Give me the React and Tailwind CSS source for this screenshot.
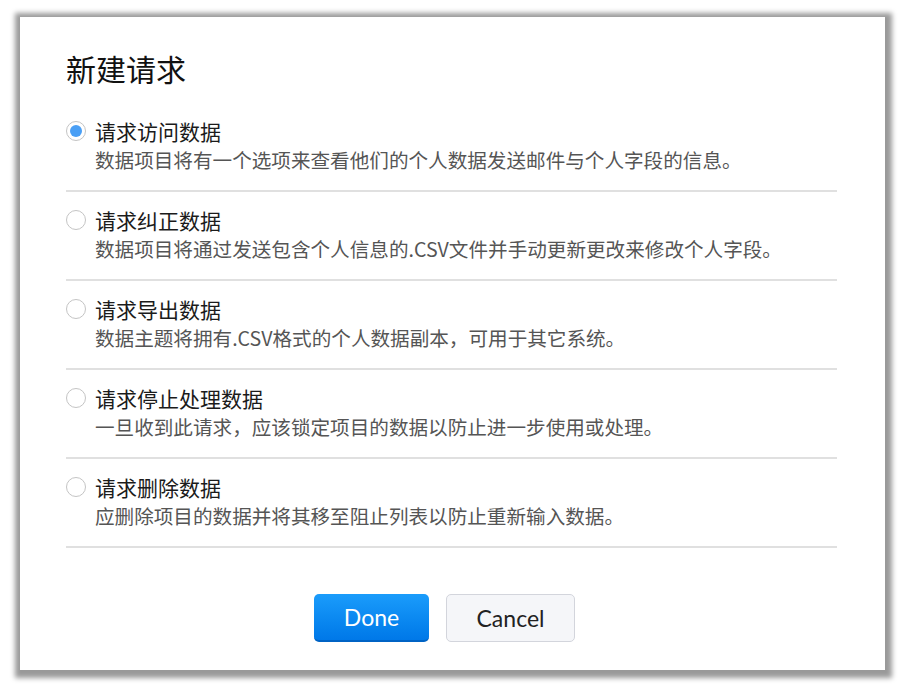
import { useState } from 'react';

const options = [
    { title: '请求访问数据', desc: '数据项目将有一个选项来查看他们的个人数据发送邮件与个人字段的信息。' },
    { title: '请求纠正数据', desc: '数据项目将通过发送包含个人信息的.CSV文件并手动更新更改来修改个人字段。' },
    { title: '请求导出数据', desc: '数据主题将拥有.CSV格式的个人数据副本，可用于其它系统。' },
    { title: '请求停止处理数据', desc: '一旦收到此请求，应该锁定项目的数据以防止进一步使用或处理。' },
    { title: '请求删除数据', desc: '应删除项目的数据并将其移至阻止列表以防止重新输入数据。' },
];

const cjk = { fontFamily: '"Microsoft YaHei", "Noto Sans CJK SC", sans-serif' };
const latin = { fontFamily: 'Lato, "Noto Sans CJK SC", sans-serif' };

const App = () => {
    const [selected, setSelected] = useState(0);

    return (
        <div className="min-h-screen bg-white pt-[17px] pl-[20px]" style={cjk}>
            <div className="w-[865px] h-[653px] bg-white shadow-[1px_2px_5px_6px_rgba(0,0,0,0.4)] pt-[33px] pl-[46px] pr-[48px] flex flex-col">
                <h2 className="text-[30px] leading-[36px] text-[#111] mb-[17px]">新建请求</h2>

                <div className="flex flex-col">
                    {options.map((opt, index) => (
                        <div key={opt.title}>
                            <button
                                onClick={() => setSelected(index)}
                                className="w-full flex gap-[9px] pt-[14px] pb-[15px] text-left"
                            >
                                <div className="h-[28px] flex items-center shrink-0">
                                    <span className="w-[20px] h-[20px] rounded-full border border-[#c4c4c4] bg-white flex items-center justify-center">
                                        {selected === index && <span className="w-[12px] h-[12px] rounded-full bg-[#4a9ff5]" />}
                                    </span>
                                </div>
                                <div>
                                    <p className="text-[21px] leading-[28px] text-[#1b1b1b]">{opt.title}</p>
                                    <p className="text-[19.6px] leading-[30px] text-[#555]">{opt.desc}</p>
                                </div>
                            </button>
                            <div className="h-[2px] bg-[#e0e0e0]" />
                        </div>
                    ))}
                </div>

                <div className="flex justify-center gap-[17px] mt-[46px] pr-[14px]" style={latin}>
                    <button className="w-[115px] h-[48px] rounded-[5px] bg-gradient-to-b from-[#1a9cfb] to-[#0078e8] border-b-2 border-[#0063c4] text-white text-[23px]">
                        Done
                    </button>
                    <button className="w-[129px] h-[48px] rounded-[5px] bg-[#f5f6f9] border border-[#d3d5dc] text-[#222] text-[23px]">
                        Cancel
                    </button>
                </div>
            </div>
        </div>
    );
};

export default App;
